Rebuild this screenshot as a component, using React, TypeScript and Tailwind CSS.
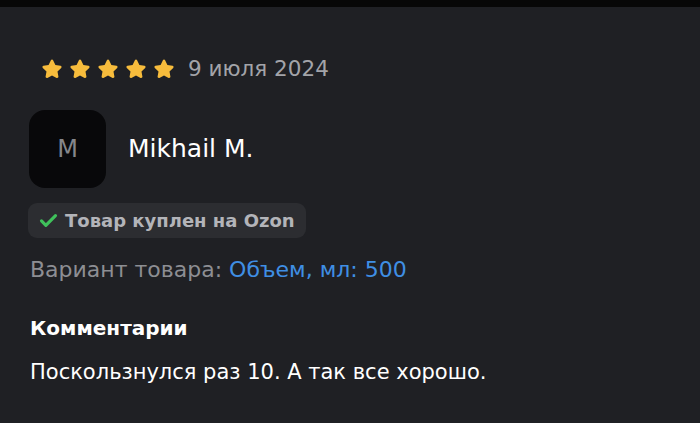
import React from "react";

const Star = () => (
  <svg viewBox="0 0 24 24" className="w-[24px] h-[24px]" fill="#f7bc3c">
    <path
      d="M12 2.6c.5 0 .9.3 1.1.7l2.3 4.7 5.1.8c1 .1 1.4 1.4.7 2.1l-3.7 3.6.9 5.1c.2 1-.9 1.8-1.8 1.3L12 18.5l-4.6 2.4c-.9.5-2-.3-1.8-1.3l.9-5.1-3.7-3.6c-.7-.7-.3-2 .7-2.1l5.1-.8 2.3-4.7c.2-.4.6-.7 1.1-.7z"
    />
  </svg>
);

const App = () => {
  return (
    <div
      className="w-[700px] h-[423px] overflow-hidden bg-[#1f2024] flex flex-col"
      style={{ fontFamily: '"DejaVu Sans", "Noto Sans", sans-serif' }}
    >
      {/* top bar */}
      <div className="h-[7px] bg-[#070707] shrink-0" />

      <div className="px-[30px] flex flex-col">
        {/* Rating + date */}
        <div className="flex items-center mt-[48px] h-[28px]">
          <div className="flex items-center gap-[4px] ml-[10px]">
            {[0, 1, 2, 3, 4].map((i) => (
              <Star key={i} />
            ))}
          </div>
          <span className="ml-[12px] text-[21.5px] text-[#a3a4a9] leading-none">
            9 июля 2024
          </span>
        </div>

        {/* Author */}
        <div className="flex items-center mt-[27px]">
          <div className="w-[77px] h-[78px] rounded-[16px] bg-[#08080a] flex items-center justify-center -ml-[1px]">
            <span className="text-[24px] text-[#85868b]">M</span>
          </div>
          <span className="ml-[22px] text-[25px] text-white">Mikhail M.</span>
        </div>

        {/* Badge */}
        <div className="mt-[15px] -ml-[2px] self-start h-[35px] rounded-[9px] bg-[#2c2d31] flex items-center pl-[10px] pr-[11px] gap-[6px]">
          <svg viewBox="0 0 24 24" className="w-[21px] h-[21px]" fill="none">
            <path
              d="M4 12.5l5 5L20 6.5"
              stroke="#3fc15b"
              strokeWidth="3.6"
              strokeLinecap="round"
              strokeLinejoin="round"
            />
          </svg>
          <span className="text-[18px] font-bold text-[#b3b4b9]">
            Товар куплен на Ozon
          </span>
        </div>

        {/* Variant */}
        <div className="mt-[18px] text-[22px] leading-[28px]">
          <span className="text-[#8d8e93]">Вариант товара: </span>
          <span className="text-[#3f8fe4]">Объем, мл: 500</span>
        </div>

        {/* Comment */}
        <div className="mt-[30px] text-[20px] leading-[28px] font-bold text-white">
          Комментарии
        </div>
        <div className="mt-[16px] text-[21px] leading-[28px] text-white">
          Поскользнулся раз 10. А так все хорошо.
        </div>

        <div className="mt-[34px] text-[21px] leading-[28px] text-[#8d8e93]">
          Вам помог этот отзыв?
        </div>
      </div>
    </div>
  );
};

export default App;
